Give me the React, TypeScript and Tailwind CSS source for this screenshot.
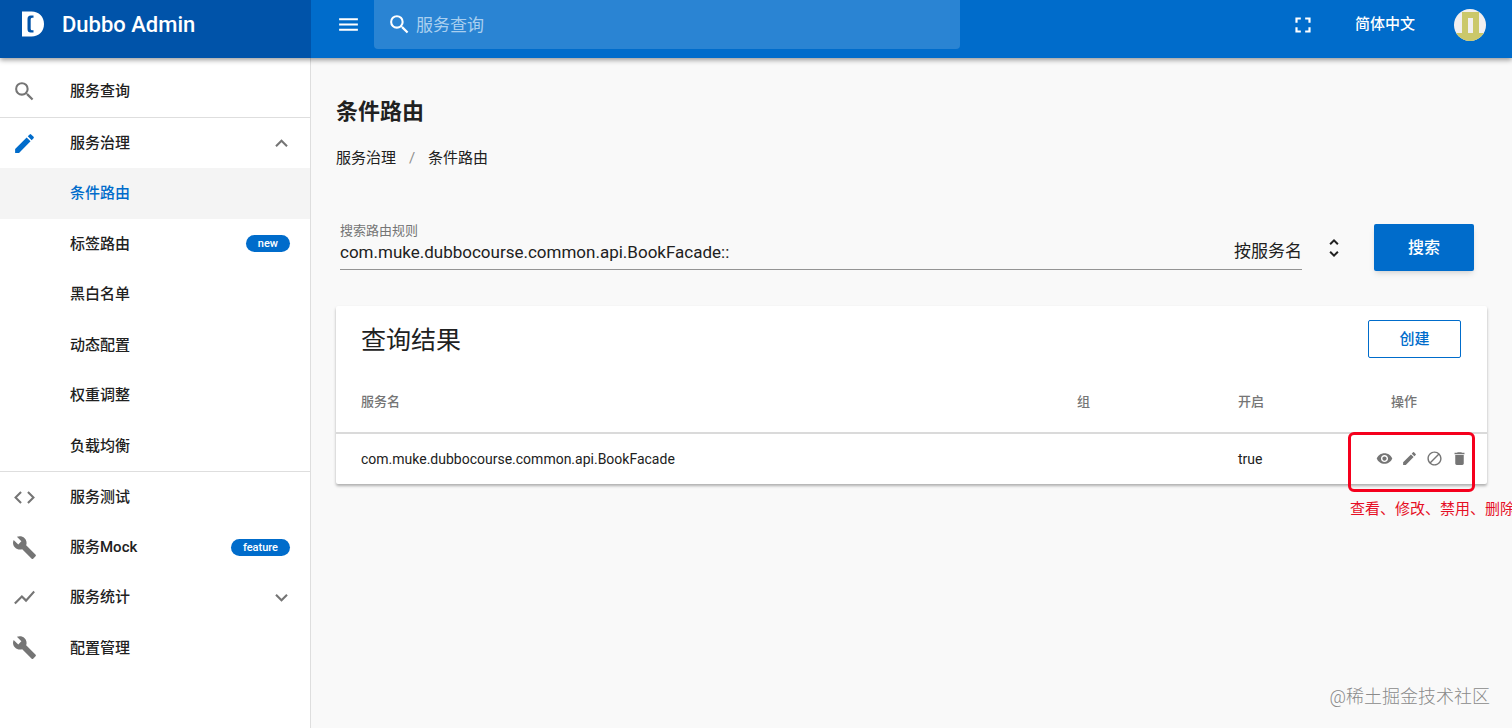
import { useState } from 'react';
import type { ReactNode } from 'react';
import clsx from 'clsx';
import {
  MdBlock,
  MdBuild,
  MdCode,
  MdDelete,
  MdEdit,
  MdExpandLess,
  MdExpandMore,
  MdFullscreen,
  MdMenu,
  MdSearch,
  MdShowChart,
  MdUnfoldMore,
  MdVisibility,
} from 'react-icons/md';

interface NavItemProps {
  label: string;
  icon?: ReactNode;
  badge?: string;
  trailing?: ReactNode;
  active?: boolean;
}

const governanceItems: NavItemProps[] = [
  { label: '条件路由', active: true },
  { label: '标签路由', badge: 'new' },
  { label: '黑白名单' },
  { label: '动态配置' },
  { label: '权重调整' },
  { label: '负载均衡' },
];

const toolItems: NavItemProps[] = [
  { label: '服务测试', icon: <MdCode size={25} /> },
  { label: '服务Mock', icon: <MdBuild size={25} />, badge: 'feature' },
  { label: '服务统计', icon: <MdShowChart size={25} />, trailing: <MdExpandMore size={25} /> },
  { label: '配置管理', icon: <MdBuild size={25} /> },
];

const rowActions = [
  { label: '查看', icon: <MdVisibility size={17} /> },
  { label: '修改', icon: <MdEdit size={17} /> },
  { label: '禁用', icon: <MdBlock size={17} /> },
  { label: '删除', icon: <MdDelete size={17} /> },
];

function Logo() {
  return (
    <svg width="22" height="26" viewBox="0 0 22 26" aria-hidden="true">
      <path
        fill="#fff"
        fillRule="evenodd"
        d="M0 .5h9.500C17 .5 22 5.500 22 13s-5 12.500-12.500 12.500H0zM11.500 4.500H8.700Q5.500 4.500 5.500 8v10q0 3.500 3.200 3.500h2.800v-2.300H10q-1.300 0-1.300-1.500V8.300q0-1.500 1.300-1.500h1.500z"
      />
    </svg>
  );
}

function Avatar() {
  return (
    <svg width="32" height="32" viewBox="0 0 32 32" className="rounded-full" aria-hidden="true">
      <rect width="32" height="32" fill="#f1eff0" />
      <path fill="#cbc86a" fillRule="evenodd" d="M8 3h17v21h7v8H0v-8h8zM14 9v15h5V9z" />
    </svg>
  );
}

function NavItem({ label, icon, badge, trailing, active }: NavItemProps) {
  return (
    <a
      href="#"
      className={clsx(
        'flex h-full items-center pr-4 pl-3 text-[15px] font-medium',
        active ? 'bg-[#f4f4f4] text-[#006ccb]' : 'text-[#212121]',
      )}
    >
      <span className="w-[58px] shrink-0 text-[#757575]">{icon}</span>
      <span className="flex-1">{label}</span>
      {badge && (
        <span className="mr-1 rounded-full bg-[#006ccb] px-3 text-[11px] leading-[17px] text-white">
          {badge}
        </span>
      )}
      {trailing && <span className="text-[#757575]">{trailing}</span>}
    </a>
  );
}

function Sidebar() {
  return (
    <nav className="w-[311px] shrink-0 border-r border-[#dedede] bg-white pt-2">
      <div className="h-[51px]">
        <NavItem label="服务查询" icon={<MdSearch size={25} />} />
      </div>
      <div className="h-[51px] border-t border-[#dedede]">
        <NavItem
          label="服务治理"
          icon={<MdEdit size={25} className="text-[#006ccb]" />}
          trailing={<MdExpandLess size={25} />}
        />
      </div>
      <ul className="grid h-[303px] auto-rows-fr">
        {governanceItems.map((item) => (
          <li key={item.label}>
            <NavItem {...item} />
          </li>
        ))}
      </ul>
      <ul className="grid h-[202px] auto-rows-fr border-t border-[#dedede]">
        {toolItems.map((item) => (
          <li key={item.label}>
            <NavItem {...item} />
          </li>
        ))}
      </ul>
    </nav>
  );
}

function Header() {
  return (
    <header className="relative z-10 flex h-[58px] bg-[#006ccb] text-white shadow-[0_2px_5px_rgba(0,0,0,0.4)]">
      <div className="flex w-[311px] shrink-0 items-center gap-[18px] bg-[#0053a9] pb-2.5 pl-[22px]">
        <Logo />
        <span className="text-[22px] font-medium">Dubbo Admin</span>
      </div>
      <div className="flex h-[49px] flex-1 items-center pr-[26px] pl-[25px]">
        <button type="button" aria-label="menu">
          <MdMenu size={25} />
        </button>
        <label className="ml-[13px] flex h-full w-[586px] items-center gap-1 rounded-b-sm bg-[#2a84d3] pl-[13px]">
          <MdSearch size={25} />
          <input
            type="search"
            aria-label="服务查询"
            placeholder="服务查询"
            className="h-full flex-1 bg-transparent text-[17px] outline-none placeholder:text-[#a9cfef]"
          />
        </label>
        <div className="ml-auto flex items-center gap-[39px]">
          <button type="button" aria-label="fullscreen">
            <MdFullscreen size={26} />
          </button>
          <button type="button" className="text-[15px] font-medium">
            简体中文
          </button>
          <Avatar />
        </div>
      </div>
    </header>
  );
}

function SearchForm() {
  const [pattern, setPattern] = useState('com.muke.dubbocourse.common.api.BookFacade::');

  return (
    <form className="mt-[54px] flex items-end pr-[13px] pl-1" onSubmit={(e) => e.preventDefault()}>
      <div className="mb-px flex flex-1 items-end border-b border-[#949494] pb-1">
        <label className="flex-1">
          <span className="block text-[13px] leading-4 text-[#757575]">搜索路由规则</span>
          <input
            type="text"
            value={pattern}
            onChange={(e) => setPattern(e.target.value)}
            className="block h-[26px] w-full bg-transparent text-[17px] outline-none"
          />
        </label>
        <select
          aria-label="按服务名"
          className="h-[26px] w-[68px] appearance-none bg-transparent text-[17px] outline-none"
        >
          <option>按服务名</option>
        </select>
      </div>
      <MdUnfoldMore size={24} className="mr-7 mb-[11px] ml-5" />
      <button
        type="submit"
        className="h-[47px] w-[100px] rounded-xs bg-[#006ccb] text-base font-medium text-white shadow-md"
      >
        搜索
      </button>
    </form>
  );
}

function ResultCard() {
  return (
    <section className="mt-[35px] rounded-xs bg-white shadow-[0_2px_3px_rgba(0,0,0,0.3)]">
      <div className="flex h-[66px] items-center justify-between pr-[26px] pl-[25px]">
        <h2 className="pt-1 text-[25px]">查询结果</h2>
        <button
          type="button"
          className="h-[38px] w-[93px] rounded-xs border border-[#006ccb] text-[15px] font-medium text-[#006ccb]"
        >
          创建
        </button>
      </div>
      <table className="w-full table-fixed text-left">
        <thead className="text-[13px] text-[#757575]">
          <tr className="h-[61px] border-b-2 border-[#dadada]">
            <th className="pl-[25px] font-medium">服务名</th>
            <th className="w-[161px] pl-[25px] font-medium">组</th>
            <th className="w-[138px] pl-[25px] font-medium">开启</th>
            <th className="w-[136px] pl-10 font-medium">操作</th>
          </tr>
        </thead>
        <tbody className="text-sm">
          <tr className="h-[51px]">
            <td className="pl-[25px]">com.muke.dubbocourse.common.api.BookFacade</td>
            <td />
            <td className="pl-[25px]">true</td>
            <td className="relative pl-[25px]">
              <div className="flex gap-2 pb-0.5 text-[#757575]">
                {rowActions.map(({ label, icon }) => (
                  <button key={label} type="button" aria-label={label}>
                    {icon}
                  </button>
                ))}
              </div>
              {/* callout over the row actions */}
              <div className="pointer-events-none absolute -top-0.5 right-3 h-[60px] w-[127px] rounded-md border-3 border-[#f5001d]" />
              <p className="absolute top-[63px] -left-px text-[15px] leading-6 whitespace-nowrap text-[#e60f26]">
                查看、修改、禁用、删除
              </p>
            </td>
          </tr>
        </tbody>
      </table>
    </section>
  );
}

export default function App() {
  return (
    <div className="relative flex min-h-screen flex-col overflow-hidden bg-[#f9f9f9] font-['Roboto','Noto_Sans_CJK_SC',sans-serif] text-[#212121]">
      <Header />
      <div className="flex flex-1">
        <Sidebar />
        <main className="min-w-0 flex-1 px-[25px] pt-[39px]">
          <h1 className="text-[22px] leading-[30px] font-bold">条件路由</h1>
          <nav className="mt-5 flex text-[15px] leading-[22px]">
            <a href="#">服务治理</a>
            <span className="w-8 text-center text-[#8f8f8f]">/</span>
            <a href="#">条件路由</a>
          </nav>
          <SearchForm />
          <ResultCard />
        </main>
      </div>
      <span className="absolute right-[22px] bottom-[17px] text-lg font-light text-[#8a8a8a]">
        @稀土掘金技术社区
      </span>
    </div>
  );
}
